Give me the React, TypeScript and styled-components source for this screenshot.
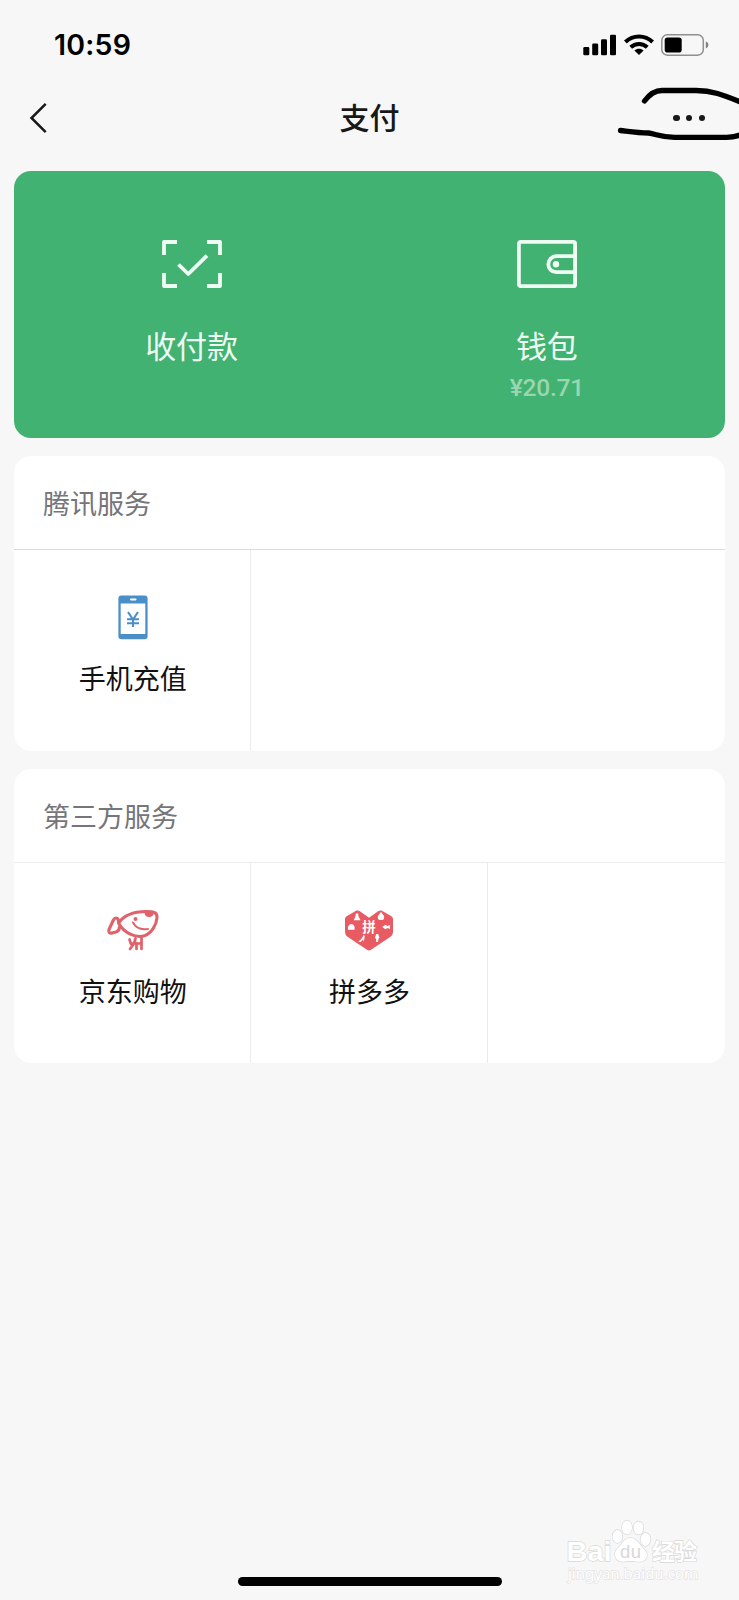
import React from 'react';
import styled, { createGlobalStyle } from 'styled-components';

const GlobalStyle = createGlobalStyle`
  * { box-sizing: border-box; }
  body {
    margin: 0;
    background: #f7f7f7;
    font-family: 'Noto Sans CJK SC', sans-serif;
    color: #111;
  }
  svg { display: block; flex: none; }
`;

const Screen = styled.div`
  position: relative;
  display: flex;
  flex-direction: column;
  width: 739px;
  height: 1600px;
  overflow: hidden;
  background: #f7f7f7;
`;

const StatusBar = styled.header`
  display: flex;
  align-items: center;
  justify-content: space-between;
  height: 88px;
  padding: 1px 30px 0 54px;
`;

const Clock = styled.time`
  padding-top: 1px;
  font: 600 28.5px/34px Inter, sans-serif;
  letter-spacing: 0.2px;
  color: #000;
`;

const StatusIcons = styled.div`
  display: flex;
  align-items: center;
  gap: 7px;
`;

const NavBar = styled.nav`
  display: grid;
  grid-template-columns: 120px 1fr 120px;
  align-items: center;
  height: 60px;
  margin-bottom: 23px;
`;

const BackButton = styled.button`
  border: 0;
  padding: 0 0 0 28px;
  background: none;
`;

const Title = styled.h1`
  margin: 0;
  padding-bottom: 5px;
  text-align: center;
  font-size: 30px;
  line-height: 44px;
  font-weight: 500;
  color: #181818;
`;

const MoreButton = styled.button`
  display: flex;
  gap: 6.2px;
  border: 0;
  padding: 0 0 0 54.4px;
  background: none;
`;

const Dot = styled.i`
  width: 6.4px;
  height: 6.4px;
  border-radius: 50%;
  background: #181818;
`;

const Scribble = styled.svg`
  position: absolute;
  top: 80px;
  right: 0;
`;

const Content = styled.main`
  display: flex;
  flex-direction: column;
  gap: 18px;
  padding: 0 14.5px 0 14px;
`;

const PayPanel = styled.section`
  display: grid;
  grid-template-columns: 1fr 1fr;
  height: 267px;
  border-radius: 17px;
  background: #41b272;
`;

const PayItem = styled.div`
  display: flex;
  flex-direction: column;
  align-items: center;
  padding-top: 69px;
  color: #eefbf2;
`;

const PayLabel = styled.span`
  margin-top: 35px;
  font-size: 31px;
  line-height: 44px;
`;

const Balance = styled.span`
  margin-top: 6px;
  font: 500 24.5px/30px Roboto, sans-serif;
  letter-spacing: -0.2px;
  color: #9ad7b1;
`;

const Card = styled.section`
  height: 294.5px;
  border-radius: 17px;
  background: #fff;
  overflow: hidden;
`;

const CardTitle = styled.h2<{ $line: string }>`
  height: 94px;
  margin: 0;
  padding: 27px 29px 0;
  border-bottom: 1px solid ${(p) => p.$line};
  font-size: 27px;
  line-height: 40px;
  font-weight: 400;
  color: #75757a;
`;

const ServiceGrid = styled.div`
  display: grid;
  grid-template-columns: repeat(3, 1fr);
  height: 201px;
`;

const Service = styled.div<{ $last?: boolean }>`
  display: flex;
  flex-direction: column;
  align-items: center;
  padding: 42px 0 0 1.5px;
  border-right: ${(p) => (p.$last ? '0' : '1px solid #ebebeb')};
`;

const ServiceLabel = styled.span`
  margin-top: 16px;
  font-size: 27px;
  line-height: 40px;
  color: #111;
`;

const HomeIndicator = styled.div`
  align-self: center;
  width: 264px;
  height: 9px;
  margin: auto 0 14.5px;
  border-radius: 5px;
  background: #000;
`;

const Watermark = styled.svg`
  position: absolute;
  left: 560px;
  top: 1514px;
`;

const SignalIcon = () => (
  <svg width="34" height="22" viewBox="0 0 34 22">
    <rect x="0.3" y="13" width="6" height="8.3" rx="1.3" />
    <rect x="9.2" y="9.5" width="6" height="11.8" rx="1.3" />
    <rect x="18" y="5.2" width="6" height="16.1" rx="1.3" />
    <rect x="27" y="0.8" width="6" height="20.5" rx="1.3" />
  </svg>
);

const WifiIcon = () => (
  <svg width="30" height="22" viewBox="0 0 30 22" fill="none" stroke="#000" strokeWidth="4">
    <path d="M1.4 8C9 .7 21 .7 28.6 8" />
    <path d="M6.700 13.200c4.700-4.400 11.900-4.400 16.600 0" />
    <path d="M10.400 16.500c2.600-2.300 6.600-2.300 9.200 0L15 21z" fill="#000" stroke="none" />
  </svg>
);

const BatteryIcon = () => (
  <svg width="48" height="22" viewBox="0 0 48 22">
    <rect x="0.8" y="0.8" width="41.5" height="20.4" rx="5.5" fill="none" stroke="#8f8f8f" strokeWidth="1.5" />
    <rect x="3.7" y="3.5" width="17" height="15" rx="2.8" />
    <path d="M44.8 7.6c3.4 1 3.4 5.8 0 6.8z" fill="#808080" />
  </svg>
);

const ScanIcon = () => (
  <svg width="60" height="48" viewBox="0 0 60 48" fill="none" stroke="#effcf4" strokeWidth="3.8">
    <path d="M2 15V2h13M45 2h13v13M58 33v13H45M15 46H2V33" strokeLinejoin="round" />
    <path d="M16.5 24.5 26.3 34 45 15.7" strokeLinejoin="round" />
  </svg>
);

const WalletIcon = () => (
  <svg width="60" height="48" viewBox="0 0 60 48" fill="none" stroke="#effcf4" strokeWidth="3.8">
    <rect x="1.9" y="1.9" width="56.2" height="44.3" rx="1.8" />
    <path d="M58 16.2H39.300a8 8 0 0 0 0 16H58" />
    <circle cx="39" cy="24.2" r="3.2" fill="#effcf4" stroke="none" />
  </svg>
);

const PhoneIcon = () => (
  <svg width="30" height="50" viewBox="0 0 30 50">
    <rect x="0.4" y="3.5" width="29.2" height="43.8" rx="3" fill="#4a8fc8" />
    <rect x="2.7" y="11.5" width="24.6" height="30.5" fill="#fff" />
    <rect x="12" y="6.6" width="6.5" height="1.8" rx="0.8" fill="#fff" />
    <path d="M10 20l5 7.500 5-7.500M9 27.200h12M9 31.200h12M15 27v8" fill="none" stroke="#4a8fc8" strokeWidth="2.100" />
  </svg>
);

const DogIcon = () => (
  <svg width="54" height="50" viewBox="0 0 54 50" fill="none" stroke="#e0626a" strokeWidth="3.100" strokeLinecap="round" strokeLinejoin="round">
    <path d="M12.500 18C18 10 29 6.600 40 6.500c8-.1 11.300 1.400 11 6-.5 7.500-5.500 15.500-12 18-8.500 3-20.500-1.700-26.500-12.500z" />
    <path d="M12.500 17.500c.3-2.500-.5-4.500-2.500-4.500-1.200 0-2 .8-2.600 2L3 24.500c-1 2.500.5 4 3 3.600l4-1c2.500-.7 3.500-2 3.500-5" />
    <path d="M27 17.500c2.500 5 8 7.500 15 6.500" strokeWidth="2" />
    <path d="M38.500 7.200c2.500-1 7-.9 9.500 0-.5 3.600-2.500 5-5 4.800-2.800-.2-4.500-1.800-4.500-4.800z" fill="#e0626a" stroke="none" />
    <circle cx="29.500" cy="14" r="2" fill="#e0626a" stroke="none" />
    <path d="M35.500 32v12M29.500 33.500l-1.500 5-4 5.500M23.500 34.500l1.500 4.500M30.500 38v6M25 38.500h10" strokeWidth="2.700" />
  </svg>
);

const HeartIcon = () => (
  <svg width="50" height="50" viewBox="0 0 50 50">
    <path d="M12.500 5.600Q14 5 15.500 6L25 12.800l9.500-6.800q1.500-1 3-.4L47 11q2 1 2 3v13q0 3-2.500 4.700L27 44.800q-2 1.400-4 0L3.500 31.700Q1 30 1 27V14q0-2 2-3z" fill="#e85b62" />
    <text x="25" y="27" textAnchor="middle" fontSize="13.500" fontWeight="700" fill="#fff" fontFamily="Noto Sans CJK SC, sans-serif">拼</text>
    <g fill="#fff">
      <path d="M11.700 8.500h2.600v2.300l2.200 4.400H9.700l2-4.400z" />
      <path d="M35.500 8.900l.8-1.400h1.400l.8 1.400q1.700 1.300 1.700 3a3.200 3.200 0 0 1-6.400 0q0-1.700 1.700-3z" />
      <path d="M4 24.800v-3q1-2.600 3.300-2.700 2.600.1 3.300 2.700v3z" />
      <path d="M38.200 22l3.300-2.300 2 1.300 2.500-1v4l-2.500-1-2 1.300z" />
      <path d="M14 36.500l3-2.100 2.800-4.600 1 1.100-1 5.800-.8-2.300-2.300 2.700z" />
      <path d="M31 32.500l1.200-3.500h2l1.200 3.500-1.200 2v2.500h-2v-2.500z" />
    </g>
  </svg>
);

const BaiduMark = () => (
  <Watermark width="150" height="76" viewBox="0 0 150 76" fill="#fff" stroke="#d8d8d8" strokeWidth="1.300" paintOrder="stroke">
    <ellipse cx="57.500" cy="22.500" rx="5" ry="6.500" />
    <ellipse cx="67" cy="13.500" rx="5" ry="7" />
    <ellipse cx="78.500" cy="14" rx="5" ry="6.500" />
    <ellipse cx="85.500" cy="25.500" rx="5" ry="6.500" />
    <path d="M70.500 24c-7 0-8.500 6.500-12 9.500-4 3.500-4.500 8-2 11.500 3.500 4.500 9 2 14.500 2s11 2.500 14.500-1.500c2.500-3.500 2-7-2-11C79.500 31 77.500 24 70.500 24z" />
    <text fontWeight="700" fontFamily="Liberation Sans, Noto Sans CJK SC, sans-serif">
      <tspan x="6.500" y="47" fontSize="28.500" textLength="45" lengthAdjust="spacingAndGlyphs">Bai</tspan>
      <tspan x="60" y="43.500" fontSize="18.500" fontWeight="400" textLength="21" fill="#d8d8d8" stroke="none">du</tspan>
      <tspan x="92" y="46" fontSize="23" textLength="45">经验</tspan>
    </text>
    <text x="8" y="65" fontSize="14.500" fontFamily="Noto Sans, sans-serif" textLength="130" lengthAdjust="spacingAndGlyphs" stroke="#e4e4e4">jingyan.baidu.com</text>
  </Watermark>
);

export default function App() {
  return (
    <>
      <GlobalStyle />
      <Screen>
        <StatusBar>
          <Clock>10:59</Clock>
          <StatusIcons>
            <SignalIcon />
            <WifiIcon />
            <BatteryIcon />
          </StatusIcons>
        </StatusBar>
        <NavBar>
          <BackButton aria-label="返回">
            <svg width="20" height="32" viewBox="0 0 20 32" fill="none" stroke="#181818" strokeWidth="2.500">
              <path d="M17.700 1.800 3.500 16l14.200 14.200" />
            </svg>
          </BackButton>
          <Title>支付</Title>
          <MoreButton aria-label="更多">
            <Dot />
            <Dot />
            <Dot />
          </MoreButton>
        </NavBar>
        <Content>
          <PayPanel>
            <PayItem>
              <ScanIcon />
              <PayLabel>收付款</PayLabel>
            </PayItem>
            <PayItem>
              <WalletIcon />
              <PayLabel>钱包</PayLabel>
              <Balance>¥20.71</Balance>
            </PayItem>
          </PayPanel>
          <Card>
            <CardTitle $line="#dcdcdc">腾讯服务</CardTitle>
            <ServiceGrid>
              <Service>
                <PhoneIcon />
                <ServiceLabel>手机充值</ServiceLabel>
              </Service>
            </ServiceGrid>
          </Card>
          <Card>
            <CardTitle $line="#ececec">第三方服务</CardTitle>
            <ServiceGrid>
              <Service>
                <DogIcon />
                <ServiceLabel>京东购物</ServiceLabel>
              </Service>
              <Service>
                <HeartIcon />
                <ServiceLabel>拼多多</ServiceLabel>
              </Service>
              <Service $last />
            </ServiceGrid>
          </Card>
        </Content>
        <HomeIndicator />
        <Scribble width="129" height="64" viewBox="0 0 129 64" fill="none" stroke="#000" strokeWidth="5.300" strokeLinecap="round">
          <path d="M34.500 21C39 15 44 10.500 52 10.500h34c16 0 26 4 46 12" />
          <path d="M10.500 50.500c12 1.500 18 2.500 28 2.500 8 1 12 4.300 26 4.300h52c8 0 11-1 15-3" />
        </Scribble>
        <BaiduMark />
      </Screen>
    </>
  );
}
